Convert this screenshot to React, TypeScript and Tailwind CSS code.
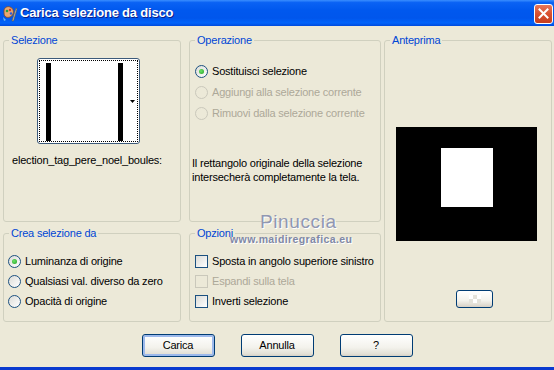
import React from "react";

function Group({
  title,
  className = "",
  children,
}: {
  title: string;
  className?: string;
  children?: React.ReactNode;
}) {
  return (
    <fieldset
      className={`border border-[#D0D0BF] rounded-[3px] min-w-0 ${className}`}
    >
      <legend className="ml-[5px] px-[2px] text-[#0046D5] leading-[13px]">
        {title}
      </legend>
      {children}
    </fieldset>
  );
}

function Radio({ checked, disabled }: { checked?: boolean; disabled?: boolean }) {
  return (
    <span
      className={`w-[13px] h-[13px] rounded-full border flex items-center justify-center shrink-0 ${
        disabled
          ? "border-[#CAC8BB] bg-[#ECE9D8]"
          : "border-[#1C5180] bg-[linear-gradient(135deg,#DCDCD7,#FFFFFF)]"
      }`}
    >
      {checked && (
        <span className="w-[5px] h-[5px] rounded-full bg-[radial-gradient(circle_at_40%_40%,#6CE26A,#21A121)]" />
      )}
    </span>
  );
}

function Check({ disabled }: { disabled?: boolean }) {
  return (
    <span
      className={`w-[13px] h-[13px] border shrink-0 ${
        disabled
          ? "border-[#CAC8BB] bg-[#ECE9D8]"
          : "border-[#1C5180] bg-[linear-gradient(135deg,#DCDCD7,#FFFFFF)]"
      }`}
    />
  );
}

function Row({
  children,
  disabled,
  h = "h-[21px]",
}: {
  children: React.ReactNode;
  disabled?: boolean;
  h?: string;
}) {
  return (
    <div
      className={`flex items-center gap-[4px] ${h} ${
        disabled ? "text-[#ACA899]" : "text-black"
      }`}
    >
      {children}
    </div>
  );
}

function XPButton({
  label,
  isDefault,
}: {
  label: string;
  isDefault?: boolean;
}) {
  return (
    <button
      className={`w-[73px] h-[23px] rounded-[3px] border border-[#003C74] bg-[linear-gradient(180deg,#FFFFFF_0%,#F3F2EC_60%,#E3E0D6_90%,#D6D0C5_100%)] text-black text-[11px] leading-none flex items-center justify-center ${
        isDefault ? "shadow-[inset_0_0_0_2px_#9DB9EB]" : ""
      }`}
    >
      {label}
    </button>
  );
}

function AppIcon() {
  return (
    <svg width="15" height="17" viewBox="0 0 15 17">
      <path d="M2 6 C2 2 6 1 8 2 C11 3 12 6 11 9 C10 12 6 13 4 12 C2 11 2 9 2 6Z" fill="#E9A770" stroke="#8A4A1E" strokeWidth="0.8" />
      <circle cx="5" cy="6" r="1.3" fill="#2E9E3A" />
      <circle cx="8" cy="5" r="1.2" fill="#D83A2A" />
      <circle cx="9" cy="8.5" r="1.2" fill="#2D5BD8" />
      <path d="M10 16 L14 3 L15 4 L11.5 16Z" fill="#C7C3B3" stroke="#6B5A3A" strokeWidth="0.6" />
      <path d="M1 12 L4 15 L2 16Z" fill="#6FB8E8" />
    </svg>
  );
}

export default function App() {
  return (
    <div className="relative w-[554px] h-[370px] bg-[#ECE9D8] flex flex-col overflow-hidden font-['Liberation_Sans',Arial,sans-serif] text-[11px] tracking-[-0.2px] text-black">
      {/* Title bar */}
      <div className="h-[26px] shrink-0 flex items-center bg-[linear-gradient(180deg,#3A8EFF_0%,#0A62F4_10%,#0058EE_40%,#0056EC_70%,#0264FA_88%,#004ADC_100%)]">
        <div className="ml-[2px] mt-[1px] w-[15px] h-[17px]">
          <AppIcon />
        </div>
        <span className="ml-[3px] text-white font-bold text-[13px] tracking-[-0.2px] [text-shadow:1px_1px_0_#0A1E8A]">
          Carica selezione da disco
        </span>
        <div className="ml-auto mr-[1px] mt-[1px] w-[19px] h-[20px] rounded-[3px] border border-white bg-[linear-gradient(180deg,#E8775A_0%,#D9502F_50%,#C53E1E_100%)] flex items-center justify-center">
          <svg width="11" height="11" viewBox="0 0 11 11">
            <path d="M1.5 1.5 L9.5 9.5 M9.5 1.5 L1.5 9.5" stroke="white" strokeWidth="2" strokeLinecap="square" />
          </svg>
        </div>
      </div>

      {/* Main area */}
      <div className="flex pl-[3px] pt-[8px]">
        <div className="w-[178px] flex flex-col gap-[5px]">
          <Group title="Selezione" className="h-[188px]">
            <div className="ml-[33px] mt-[11px] w-[103px] h-[86px] rounded-[3px] border border-[#3C5A7A] bg-white p-[1px]">
              <div className="relative w-full h-full border border-dotted border-black flex">
                <div className="ml-[6px] mt-[2px] w-[5px] h-[78px] bg-black" />
                <div className="ml-[67px] mt-[2px] w-[5px] h-[78px] bg-black" />
                <svg className="absolute right-[2px] top-[39px]" width="5" height="3" viewBox="0 0 5 3">
                  <path d="M0 0 L5 0 L2.5 3Z" fill="black" />
                </svg>
              </div>
            </div>
            <div className="ml-[8px] mt-[10px] leading-[13px] whitespace-nowrap">
              election_tag_pere_noel_boules:
            </div>
          </Group>
          <Group title="Crea selezione da" className="h-[95px]">
            <div className="mt-[11px] pl-[4px]">
              <Row h="h-[20px]">
                <Radio checked />
                <span>Luminanza di origine</span>
              </Row>
              <Row h="h-[20px]">
                <Radio />
                <span>Qualsiasi val. diverso da zero</span>
              </Row>
              <Row h="h-[20px]">
                <Radio />
                <span>Opacità di origine</span>
              </Row>
            </div>
          </Group>
        </div>

        <div className="ml-[8px] w-[192px] flex flex-col gap-[5px]">
          <Group title="Operazione" className="h-[188px]">
            <div className="mt-[14px] pl-[5px]">
              <Row>
                <Radio checked />
                <span>Sostituisci selezione</span>
              </Row>
              <Row disabled>
                <Radio disabled />
                <span>Aggiungi alla selezione corrente</span>
              </Row>
              <Row disabled>
                <Radio disabled />
                <span>Rimuovi dalla selezione corrente</span>
              </Row>
            </div>
            <div className="mt-[32px] pl-[2px] leading-[14px] whitespace-nowrap">
              Il rettangolo originale della selezione
              <br />
              intersecherà completamente la tela.
            </div>
          </Group>
          <Group title="Opzioni" className="h-[95px]">
            <div className="mt-[11px] pl-[5px]">
              <Row h="h-[20px]">
                <Check />
                <span>Sposta in angolo superiore sinistro</span>
              </Row>
              <Row h="h-[20px]" disabled>
                <Check disabled />
                <span>Espandi sulla tela</span>
              </Row>
              <Row h="h-[20px]">
                <Check />
                <span>Inverti selezione</span>
              </Row>
            </div>
          </Group>
        </div>

        <div className="ml-[3px] w-[168px]">
          <Group title="Anteprima" className="h-[288px]">
            <div className="ml-[11px] mt-[80px] w-[141px] h-[114px] bg-black pl-[45px] pt-[21px]">
              <div className="w-[52px] h-[59px] bg-white" />
            </div>
            <div className="ml-[71px] mt-[49px] w-[37px] h-[18px] rounded-[3px] border border-[#003C74] bg-[linear-gradient(180deg,#FFFFFF_0%,#F3F2EC_60%,#D6D0C5_100%)] flex items-center justify-center">
              <div className="grid grid-cols-3 w-[12px] h-[8px]">
                <span className="bg-white" />
                <span className="bg-[#E4E2DA]" />
                <span className="bg-white" />
                <span className="bg-[#E4E2DA]" />
                <span className="bg-white" />
                <span className="bg-[#E4E2DA]" />
              </div>
            </div>
          </Group>
        </div>
      </div>

      {/* Buttons */}
      <div className="mt-[12px] flex justify-center gap-[26px]">
        <XPButton label="Carica" isDefault />
        <XPButton label="Annulla" />
        <XPButton label="?" />
      </div>

      <div className="flex-1" />
      <div className="h-[3px] shrink-0 bg-[#0A3ACF]" />

      {/* Watermark */}
      <div className="absolute left-[260px] top-[211px] text-[19px] leading-[22px] tracking-[0.6px] text-[#9097B2] font-['Liberation_Sans',Arial,sans-serif] [text-shadow:1px_1px_0_#ffffff]">
        Pinuccia
      </div>
      <div className="absolute left-[230px] top-[233px] text-[10.5px] leading-[12px] tracking-[0.4px] text-[#8088A6] font-bold font-['Liberation_Sans',Arial,sans-serif] [text-shadow:1px_1px_0_#ffffff]">
        www.maidiregrafica.eu
      </div>
    </div>
  );
}
